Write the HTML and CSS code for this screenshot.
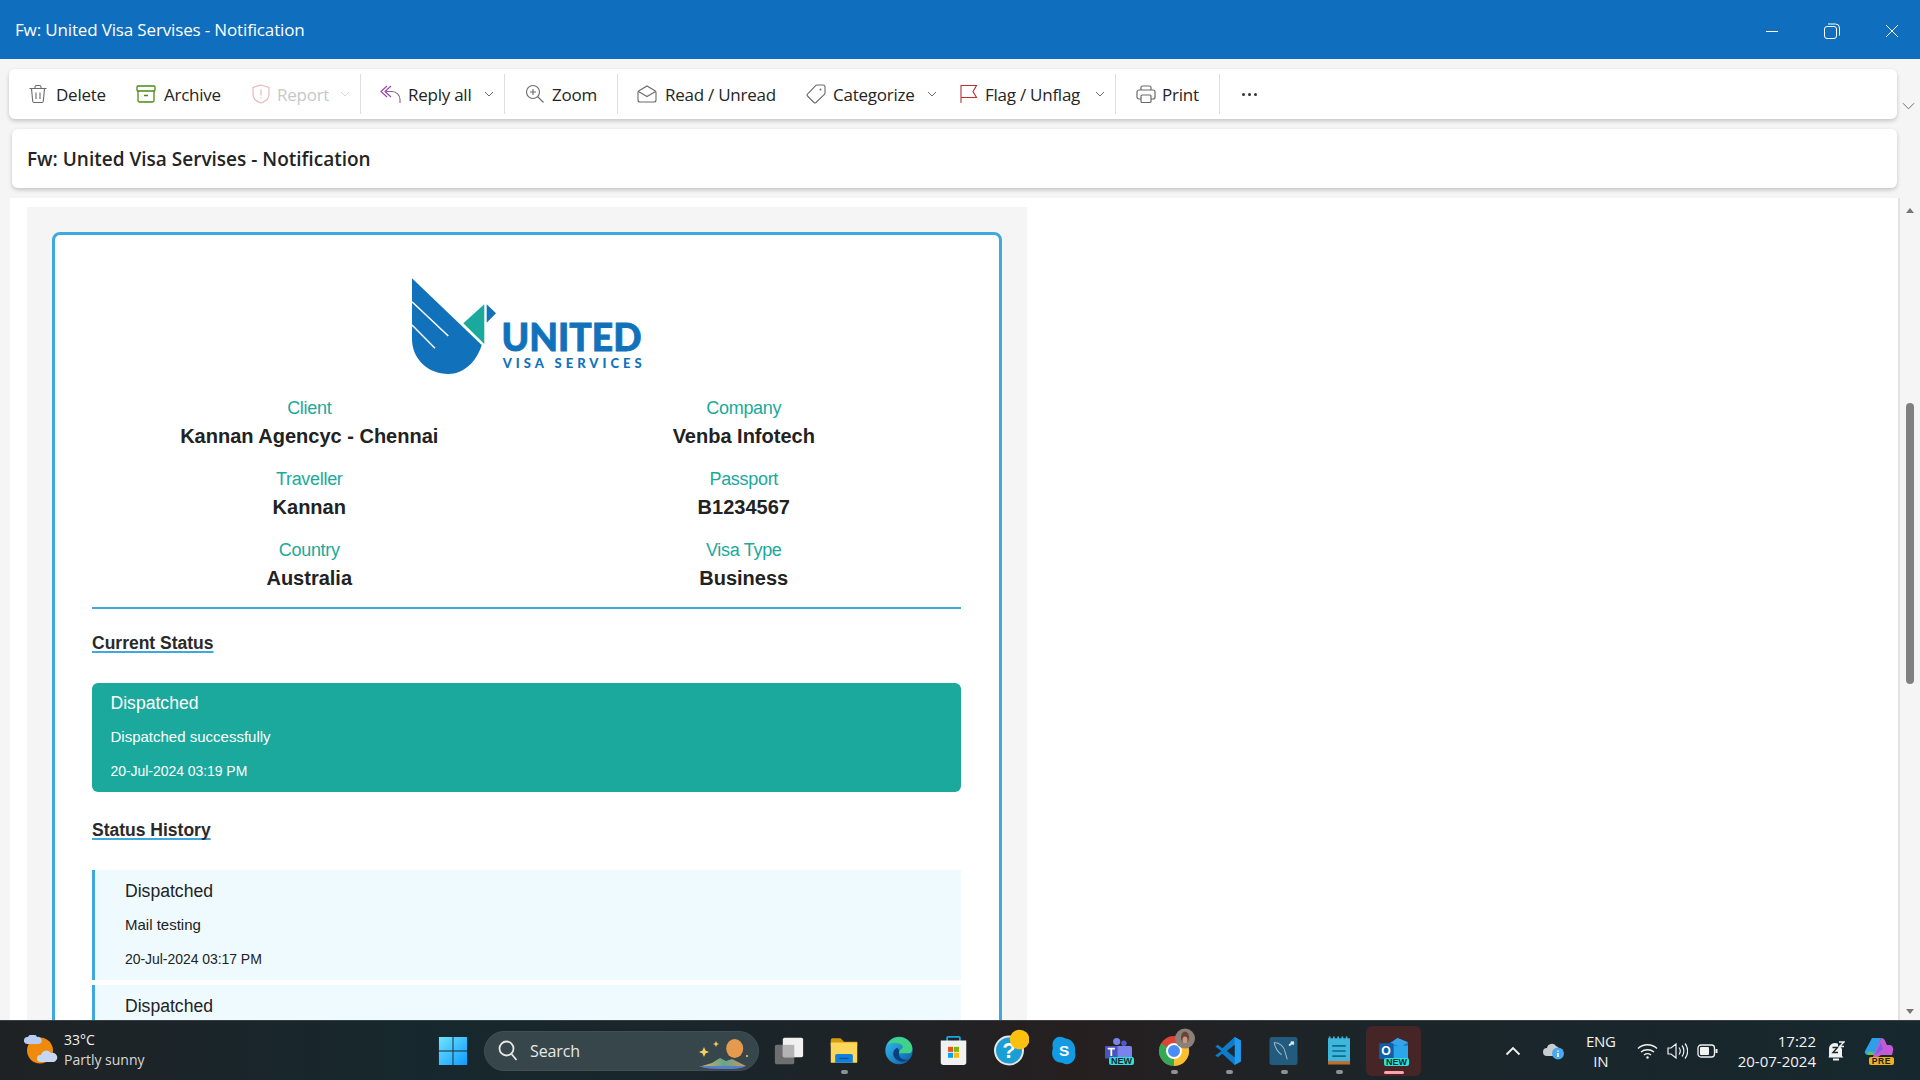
FILE: index.html
```html
<!DOCTYPE html>
<html lang="en">
<head>
<meta charset="utf-8">
<title>Fw: United Visa Servises - Notification</title>
<link rel="stylesheet" href="styles.css">
</head>
<body>
<div class="page">
  <header class="titlebar">
    <span class="title-text">Fw: United Visa Servises - Notification</span>
    <div class="win-controls">
      <svg width="14" height="14" viewBox="0 0 14 14"><path d="M1 7.500h12" stroke="#fff" fill="none"/></svg>
      <svg width="18" height="18" viewBox="0 0 18 18" fill="none" stroke="#fff"><rect x="1.500" y="4.500" width="12" height="12" rx="2.500"/><path d="M5 2h7.500a4 4 0 0 1 4 4v7.500"/></svg>
      <svg width="14" height="14" viewBox="0 0 14 14"><path d="M1 1l12 12M13 1L1 13" stroke="#fff" fill="none"/></svg>
    </div>
  </header>

  <div class="work">
    <div class="toolbar-row">
      <div class="card toolbar">
        <div class="tb-btn w-delete"><svg class="ic" viewBox="0 0 20 20" fill="none" stroke="#6b6b6b" stroke-width="1.100"><path d="M1.500 4.500h17M7 4.500V3a1.500 1.500 0 0 1 1.500-1.500h3A1.500 1.500 0 0 1 13 3v1.500M3.500 4.500l1.200 12.700a1.500 1.500 0 0 0 1.500 1.300h7.600a1.500 1.500 0 0 0 1.500-1.300l1.200-12.700M8 8.500v6.500M12 8.500v6.500"/></svg><span>Delete</span></div>
        <div class="tb-btn w-archive"><svg class="ic" viewBox="0 0 20 20" fill="none" stroke="#4a8a12" stroke-width="1.300"><rect x="1" y="2" width="18" height="5" rx="1"/><path d="M2 7v9.500A1.500 1.500 0 0 0 3.500 18h13a1.500 1.500 0 0 0 1.500-1.500V7M8 11.500h4"/></svg><span>Archive</span></div>
        <div class="tb-btn w-report muted"><svg class="ic" viewBox="0 0 20 20" fill="none" stroke="#e8b9bb" stroke-width="1.200"><path d="M10 1l8 2.500V10c0 4.500-3.500 7.500-8 9-4.500-1.500-8-4.500-8-9V3.500z"/><path d="M10 5.500v6M10 13.500v1.200"/></svg><span>Report</span><svg class="chev" viewBox="0 0 10 6" fill="none" stroke="#d8d8d8"><path d="M1 1l4 4 4-4"/></svg></div>
        <i class="sep"></i>
        <div class="tb-btn w-reply"><svg class="ic" viewBox="0 0 22 20" fill="none" stroke="#9b3fae" stroke-width="1.100"><path d="M7 2L1 7.500 7 13M11 2L5 7.500 11 13"/><path d="M5 7.500h7a8 8 0 0 1 8 8V19" stroke="#7d6a85"/></svg><span>Reply all</span><svg class="chev" viewBox="0 0 10 6" fill="none" stroke="#6b6b6b"><path d="M1 1l4 4 4-4"/></svg></div>
        <i class="sep"></i>
        <div class="tb-btn w-zoom"><svg class="ic" viewBox="0 0 20 20" fill="none" stroke="#6b6b6b" stroke-width="1.100"><circle cx="8" cy="8" r="6.500"/><path d="M12.500 12.500l6 6M8 5v6M5 8h6"/></svg><span>Zoom</span></div>
        <i class="sep"></i>
        <div class="tb-btn w-read"><svg class="ic" viewBox="0 0 20 20" fill="none" stroke="#6b6b6b" stroke-width="1.100"><path d="M1 8.500a2 2 0 0 1 1-1.700L10 2l8 4.800a2 2 0 0 1 1 1.700V16a2 2 0 0 1-2 2H3a2 2 0 0 1-2-2zM1.500 7.500l8.500 5 8.500-5"/></svg><span>Read / Unread</span></div>
        <div class="tb-btn w-cat"><svg class="ic" viewBox="0 0 20 20" fill="none" stroke="#6b6b6b" stroke-width="1.100"><path d="M11 1h6a2 2 0 0 1 2 2v6a2 2 0 0 1-.6 1.400L10 18.500a1.500 1.500 0 0 1-2 0L1.500 12a1.500 1.500 0 0 1 0-2L9.600 1.600A2 2 0 0 1 11 1z"/><circle cx="14.500" cy="5.500" r="1" fill="#6b6b6b" stroke="none"/></svg><span>Categorize</span><svg class="chev" viewBox="0 0 10 6" fill="none" stroke="#6b6b6b"><path d="M1 1l4 4 4-4"/></svg></div>
        <div class="tb-btn w-flag"><svg class="ic" viewBox="0 0 20 20" fill="none" stroke="#bc2f32" stroke-width="1.100"><path d="M2 19V1.500h15.500l-3.500 6 3.500 6H2"/></svg><span>Flag / Unflag</span><svg class="chev" viewBox="0 0 10 6" fill="none" stroke="#6b6b6b"><path d="M1 1l4 4 4-4"/></svg></div>
        <i class="sep"></i>
        <div class="tb-btn w-print"><svg class="ic" viewBox="0 0 20 20" fill="none" stroke="#6b6b6b" stroke-width="1.200"><path d="M5 6V3.500A1.500 1.500 0 0 1 6.500 2h7A1.500 1.500 0 0 1 15 3.500V6"/><path d="M5 15H3a2 2 0 0 1-2-2V8a2 2 0 0 1 2-2h14a2 2 0 0 1 2 2v5a2 2 0 0 1-2 2h-2"/><rect x="5" y="11" width="10" height="7.500" rx="1"/></svg><span>Print</span></div>
        <i class="sep"></i>
        <div class="tb-more"><b></b><b></b><b></b></div>
      </div>
      <svg class="tb-expand" viewBox="0 0 14 8" fill="none" stroke="#666"><path d="M1 1l6 6 6-6"/></svg>
    </div>

    <div class="subject-row"><div class="card subject">Fw: United Visa Servises - Notification</div></div>

    <div class="reading">
      <div class="message">
        <div class="mail-bg">
          <div class="mail-card">
            <div class="logo">
              <svg width="236" height="100" viewBox="0 0 236 100">
                <path d="M1 1.300L70.700 68C66 84 53 97 37.300 97 17 97 1 82 1 62z" fill="#1172bb"/>
                <path d="M1 24.700L37.300 59M1 48L24 71.300" stroke="#fff" stroke-width="1.500" fill="none"/>
                <path d="M52.300 46.300L73.300 27.300V67z" fill="#1aa99c"/>
                <path d="M75.700 27.300L85 36.300 75.700 45.700z" fill="#1172bb"/>
                <text x="90.500" y="74.300" class="logo-big" textLength="140" lengthAdjust="spacingAndGlyphs">UNITED</text>
                <text x="91.700" y="91.300" class="logo-small" textLength="139" lengthAdjust="spacing">VISA SERVICES</text>
              </svg>
            </div>
            <div class="info-grid">
              <div class="info"><div class="lbl">Client</div><div class="val">Kannan Agencyc - Chennai</div></div>
              <div class="info"><div class="lbl">Company</div><div class="val">Venba Infotech</div></div>
              <div class="info"><div class="lbl">Traveller</div><div class="val">Kannan</div></div>
              <div class="info"><div class="lbl">Passport</div><div class="val">B1234567</div></div>
              <div class="info"><div class="lbl">Country</div><div class="val">Australia</div></div>
              <div class="info"><div class="lbl">Visa Type</div><div class="val">Business</div></div>
            </div>
            <h3 class="sec-head first">Current Status</h3>
            <div class="current">
              <div class="st-name">Dispatched</div>
              <div class="st-line">Dispatched successfully</div>
              <div class="st-date">20-Jul-2024 03:19 PM</div>
            </div>
            <h3 class="sec-head">Status History</h3>
            <div class="hist">
              <div class="st-name">Dispatched</div>
              <div class="st-line">Mail testing</div>
              <div class="st-date">20-Jul-2024 03:17 PM</div>
            </div>
            <div class="hist">
              <div class="st-name">Dispatched</div>
            </div>
          </div>
        </div>
      </div>
      <div class="scroll">
        <svg class="sc-arrow" viewBox="0 0 8 5"><path d="M0 5L4 0l4 5z" fill="#777"/></svg>
        <div class="sc-track"><div class="sc-thumb"></div></div>
        <svg class="sc-arrow" viewBox="0 0 8 5"><path d="M0 0l4 5 4-5z" fill="#777"/></svg>
      </div>
    </div>
  </div>

  <footer class="taskbar">
    <div class="weather">
      <svg width="34" height="32" viewBox="0 0 34 32">
        <ellipse cx="16" cy="15.500" rx="13" ry="13" fill="#f08a0c"/>
        <path d="M3 9a3.500 3.500 0 0 1 1-7 5 5 0 0 1 9 0 3.500 3.500 0 0 1 2 7z" fill="#b9cdf0"/>
        <path d="M16 27a3.500 3.500 0 0 1 1-7 5.500 5.500 0 0 1 10-2 4.500 4.500 0 0 1 3 9z" fill="#c6d7f4"/>
      </svg>
      <div class="w-text"><div class="w-temp">33°C</div><div class="w-desc">Partly sunny</div></div>
    </div>
    <div class="tb-center">
      <div class="tk tk-start"><svg width="30" height="30" viewBox="0 0 32 32"><defs><linearGradient id="win" x1="0" y1="0" x2="1" y2="1"><stop offset="0" stop-color="#6fe3ff"/><stop offset="1" stop-color="#0f9bff"/></linearGradient></defs><path d="M1 1h14.500v14.500H1zM16.500 1H31v14.500H16.500zM1 16.500h14.500V31H1zM16.500 16.500H31V31H16.500z" fill="url(#win)"/></svg></div>
      <div class="search">
        <svg width="20" height="22" viewBox="0 0 20 22" fill="none" stroke="#e6e6e6" stroke-width="1.800"><circle cx="8.500" cy="8.500" r="7"/><path d="M13.500 14l5 6"/></svg>
        <span>Search</span>
        <svg class="search-art" width="52" height="30" viewBox="0 0 52 30"><defs><linearGradient id="mtn" x1="0" y1="0" x2="1" y2="0"><stop offset="0" stop-color="#d6b45c"/><stop offset=".5" stop-color="#63a58e"/><stop offset="1" stop-color="#c79a5c"/></linearGradient></defs><path d="M6 8l1.500 3.500L11 13l-3.500 1.500L6 18l-1.500-3.500L1 13l3.500-1.500zM18 2l1 2.200 2.200.8-2.200.8-1 2.200-1-2.200-2.200-.8 2.200-.8z" fill="#f6cf63"/><ellipse cx="36.700" cy="9.500" rx="8.500" ry="9.500" fill="#e69a4d"/><circle cx="49" cy="17" r="1" fill="#f6cf63"/><path d="M4 27l10-3 8-5 6 3 6-2 8 4 6 3z" fill="url(#mtn)"/><path d="M1 27h47c-4 2.500-10 3-20 3s-22 0-27-3z" fill="#5b7dc8"/></svg>
      </div>
      <div class="tk tk-task"><svg width="30" height="30" viewBox="0 0 34 34"><rect x="1" y="10" width="22" height="22" rx="2" fill="#6e6e6e"/><rect x="10" y="2" width="23" height="22" rx="2" fill="#f1f1f1"/><rect x="10" y="10" width="13" height="14" fill="#b4b4b4"/></svg></div>
      <div class="tk open"><svg width="30" height="27" viewBox="0 0 34 30"><path d="M2 3a2 2 0 0 1 2-2h9l4 4h15v5H2z" fill="#d79a0c"/><path d="M2 6h30v22a1 1 0 0 1-1 1H3a1 1 0 0 1-1-1z" fill="#fdd75b"/><path d="M7 29v-8a2 2 0 0 1 2-2h16a2 2 0 0 1 2 2v8z" fill="#0f7fdc"/><path d="M12 24h10" stroke="#0b4d9a" stroke-width="1.500"/></svg></div>
      <div class="tk"><svg width="30" height="31" viewBox="0 0 32 34"><defs><linearGradient id="edge" x1="0" y1="0" x2="1" y2="1"><stop offset="0" stop-color="#35c1f1"/><stop offset="1" stop-color="#0c59a4"/></linearGradient></defs><circle cx="16" cy="17" r="15" fill="url(#edge)"/><path d="M4 10C8 1 22 0 28 8c4 5 3 11 0 12H16c0-5 5-4 4-8-2-4-11-4-16-2z" fill="#3fd38a"/><path d="M14 14c-5 2-6 9-1 13 4 3 10 3 14 0-6 1-11-2-11-6 0-3 1-5-2-7z" fill="#0c3f82"/></svg></div>
      <div class="tk"><svg width="29" height="31" viewBox="0 0 30 34"><path d="M8 7V3a1 1 0 0 1 1-1h12a1 1 0 0 1 1 1v4" fill="none" stroke="#17a6e6" stroke-width="2"/><path d="M1 6h28v24a3 3 0 0 1-3 3H4a3 3 0 0 1-3-3z" fill="#f1f1f1"/><path d="M9 13h5.500v5.500H9z" fill="#f25022"/><path d="M15.500 13H21v5.500h-5.500z" fill="#7fba00"/><path d="M9 19.500h5.500V25H9z" fill="#00a4ef"/><path d="M15.500 19.500H21V25h-5.500z" fill="#ffb900"/></svg></div>
      <div class="tk"><svg width="40" height="44" viewBox="0 -2 40 44"><circle cx="20" cy="19.500" r="14" fill="#1a9ed4" stroke="#e6e6e6" stroke-width="2"/><text x="20" y="27" class="q-mark">?</text><circle cx="30.600" cy="8.500" r="9.800" fill="#fcc010"/></svg></div>
      <div class="tk"><svg width="28" height="29" viewBox="0 0 30 34"><path d="M10 1c3 0 4 1 7 2 8 1 12 8 11 16 2 7-3 14-10 14-3 0-5-2-8-2C3 30-1 23 2 14 0 8 4 1 10 1z" fill="#129ae2"/><text x="15" y="24" class="s-mark">S</text></svg></div>
      <div class="tk"><svg width="29" height="27" viewBox="0 0 32 30"><circle cx="14" cy="5" r="4" fill="#7b83eb"/><circle cx="22" cy="7" r="3" fill="#5059c9"/><rect x="11" y="10" width="20" height="19" rx="2" fill="#7b83eb"/><rect x="1" y="10" width="14" height="14" rx="1" fill="#4b53bc"/><path d="M4 13h8M8 13v8" stroke="#fff" stroke-width="2"/></svg><span class="new-badge">NEW</span></div>
      <div class="tk open"><svg width="44" height="48" viewBox="0 -4 44 48"><circle cx="22" cy="20" r="15" fill="#db4437"/><path d="M22 20L35 12.500A15 15 0 0 1 22 35z" fill="#fbc02d"/><path d="M22 20V35A15 15 0 0 1 9 12.500z" fill="#34a853"/><circle cx="22" cy="20" r="7" fill="#4a8cf5" stroke="#fff" stroke-width="2"/><circle cx="33" cy="7.500" r="10" fill="#8a8178"/><ellipse cx="33" cy="6.500" rx="4" ry="6" fill="#6b4234"/><ellipse cx="33" cy="9" rx="2.500" ry="3.500" fill="#c79a82"/></svg></div>
      <div class="tk open"><svg width="31" height="30" viewBox="0 0 30 34"><path d="M22 1l7 4v24l-7 4-14-13-5 4-3-2 7-5-7-5 3-2 5 4z" fill="#0f7cc9"/><path d="M22 1l7 4v24l-7 4V1z" fill="#1f9cf0"/><path d="M22 10l-9 7 9 7z" fill="#1a2b33"/></svg></div>
      <div class="tk open"><svg width="29" height="28" viewBox="0 0 30 30"><rect x="0" y="0" width="30" height="30" rx="3" fill="#235b7e"/><path d="M5 6c6 0 11 4 12 11l2 7M5 6c1 6 4 10 8 13" stroke="#9cb9c8" stroke-width="1.100" fill="none"/><path d="M21 9l5-4M23 5l3 3" stroke="#dfe8ee" stroke-width="2"/></svg></div>
      <div class="tk open"><svg width="22" height="30" viewBox="0 0 26 34"><rect x="0" y="2" width="26" height="30" fill="#3fb6dc"/><path d="M5 11h16M5 17h16M5 23h16" stroke="#0b6c8e" stroke-width="2"/><path d="M0 29h26v4H0z" fill="#c46a2c"/><path d="M2 0v3M7 0v3M12 0v3M17 0v3M22 0v3" stroke="#3fb6dc" stroke-width="2"/></svg></div>
      <div class="tk active"><svg width="30" height="28" viewBox="0 0 34 32"><path d="M10 8L21 1l12 5v20H10z" fill="#1579cd"/><path d="M21 1l12 5-8 5-12-4z" fill="#3aa3e8"/><path d="M17 10h16v16H17z" fill="#28a8ea"/><rect x="0" y="7" width="16" height="18" rx="1" fill="#0f5ea8"/><text x="8" y="21" class="o-mark">O</text></svg><span class="new-badge">NEW</span></div>
    </div>
    <div class="tray">
      <svg width="16" height="10" viewBox="0 0 16 10" fill="none" stroke="#f2f2f2" stroke-width="1.800"><path d="M1.500 8.500L8 2l6.500 6.500"/></svg>
      <svg class="tray-cloud" width="22" height="18" viewBox="0 0 22 18"><path d="M4 14a4 4 0 0 1 0-8 5 5 0 0 1 9-2 4 4 0 0 1 3 3v7z" fill="#c8cdd0"/><circle cx="15" cy="11.500" r="6" fill="#4aa8ee"/><path d="M15 8.500v1.200M15 11v4" stroke="#fff" stroke-width="1.500"/></svg>
      <div class="lang"><div>ENG</div><div>IN</div></div>
      <div class="tray-icons">
        <svg width="21" height="16" viewBox="0 0 21 16" fill="none" stroke="#f2f2f2" stroke-width="1.300"><path d="M1 5.500c5-5 14-5 19 0M4 9c3.500-3 9.500-3 13 0M7 12c2-1.500 5-1.500 7 0"/><circle cx="10.500" cy="14.500" r="1.200" fill="#f2f2f2" stroke="none"/></svg>
        <svg width="21" height="18" viewBox="0 0 21 18" fill="none" stroke="#f2f2f2" stroke-width="1.200"><path d="M1 6h3l5-4v14l-5-4H1zM12 5.500c1.500 2 1.500 5 0 7M15 3.500c2.500 3 2.500 8 0 11M18 1.500c3.500 4 3.500 11 0 15"/></svg>
        <svg width="21" height="14" viewBox="0 0 21 14"><rect x="1" y="1" width="16.500" height="12" rx="3" fill="none" stroke="#f2f2f2" stroke-width="1.300"/><rect x="3" y="3" width="9" height="8" rx="1" fill="#f2f2f2"/><rect x="18.500" y="5" width="2" height="4" fill="#f2f2f2"/></svg>
      </div>
      <div class="clock"><div>17:22</div><div>20-07-2024</div></div>
      <svg class="bell" width="18" height="20" viewBox="0 0 18 20"><path d="M2 15V8a6 6 0 0 1 9-5.200V6h2.500L15 8v7l1.500 1.500h-15z" fill="#f2f2f2"/><path d="M6 18.500h6" stroke="#f2f2f2" stroke-width="2"/><path d="M5.500 6.500h5l-4.500 5h5" stroke="#1a2528" stroke-width="1.400" fill="none"/><path d="M12 1h5l-4.500 4.500H17" stroke="#f2f2f2" stroke-width="1.400" fill="none"/></svg>
      <div class="copilot"><svg width="30" height="24" viewBox="0 0 30 24"><path d="M8 1h9l-6 17H4a3 3 0 0 1-3-4z" fill="#2f9fe8"/><path d="M3 15c4-1 8 0 8 3H4z" fill="#63c54b"/><path d="M17 1c3 0 4 2 5 5l1 2h3c2 0 4 3 3 6l-1 4H17l-6 4H8z" fill="#c25bd6"/><path d="M11 18l6-12 2 6z" fill="#7d5ce6"/></svg><span class="pre-badge">PRE</span></div>
    </div>
  </footer>
</div>
</body>
</html>
```

FILE: styles.css
```css
* { box-sizing: border-box; }
html, body { margin: 0; height: 100%; overflow: hidden; }
body { font-family: "Open Sans", "Noto Sans", sans-serif; background: #f5f5f5; color: #242424; }
.page { display: flex; flex-direction: column; height: 1080px; }

.titlebar { height: 59px; flex: none; background: #106ebe; color: #fff; display: flex; align-items: center; justify-content: space-between; padding: 0 0 0 15px; }
.title-text { font-size: 17px; letter-spacing: -0.15px; }
.win-controls { display: flex; align-items: center; gap: 44px; padding-right: 21px; margin-top: 3px; }

.work { flex: 1; min-height: 0; display: flex; flex-direction: column; }
.card { background: #fff; border-radius: 6px; box-shadow: 0 2px 4px rgba(0,0,0,.2); }
.toolbar-row { display: flex; align-items: flex-start; padding: 10px 0 0 9px; height: 60px; flex: none; }
.toolbar { width: 1888px; height: 50px; display: flex; align-items: center; padding: 0 0 0 19px; flex: none; }
.tb-expand { width: 13px; height: 8px; margin: 33px 0 0 5px; flex: none; }
.tb-btn { display: flex; align-items: center; height: 100%; font-size: 17px; letter-spacing: -0.25px; color: #242424; flex: none; }
.tb-btn span { margin-left: 8px; }
.ic { width: 20px; height: 20px; flex: none; }
.chev { width: 10px; height: 6px; margin-left: 11px; flex: none; }
.tb-btn.muted { color: #c8c8c8; }
.sep { width: 1px; height: 40px; background: #dedede; flex: none; }
.w-delete { width: 108px; }
.w-archive { width: 115px; }
.w-report { width: 109px; }
.w-report span { margin-left: 6px; }
.w-reply { width: 143px; padding-left: 19px; }
.w-reply .ic { width: 22px; }
.w-reply span { margin-left: 6px; }
.w-reply .chev { margin-left: 13px; }
.w-zoom { width: 112px; padding-left: 20px; }
.w-zoom span { margin-left: 7px; }
.w-read { width: 188px; padding-left: 19px; }
.w-cat { width: 153px; }
.w-cat span { margin-left: 7px; }
.w-cat .chev { margin-left: 13px; }
.w-flag { width: 156px; }
.w-flag span { margin-left: 6px; }
.w-flag .chev { margin-left: 15px; }
.w-print { width: 103px; padding-left: 20px; }
.w-print span { margin-left: 6px; }
.tb-more { display: flex; gap: 3px; padding-left: 22px; }
.tb-more b { width: 3px; height: 3px; border-radius: 50%; background: #333; }

.subject-row { padding: 10px 23px 0 12px; height: 69px; flex: none; }
.subject { height: 59px; display: flex; align-items: center; padding: 0 15px; font-size: 19px; font-weight: 600; }

.reading { flex: 1; min-height: 0; display: flex; margin-top: 10px; }
.message { width: 1888px; margin-left: 10px; background: #fff; padding: 9px 0 0 17px; overflow: hidden; flex: none; }
.mail-bg { width: 1000px; background: #f5f5f5; padding: 25px 25px 0 25px; height: 900px; }
.mail-card { background: #fff; border: 3px solid #3ea9dc; border-radius: 8px; padding: 42px 38px 0 37px; height: 1000px; font-family: "Liberation Sans", Arial, sans-serif; }

.logo { display: flex; justify-content: center; height: 100px; padding-left: 4px; }
.logo-big { font-family: Lato, sans-serif; font-weight: 900; font-size: 37px; fill: #1172bb; stroke: #1172bb; stroke-width: .8px; }
.logo-small { font-family: Lato, sans-serif; font-weight: 900; font-size: 13px; fill: #1172bb; }

.info-grid { display: grid; grid-template-columns: 1fr 1fr; row-gap: 15px; padding-bottom: 13px; border-bottom: 2px solid #3ea9dc; margin-top: 19px; }
.info { text-align: center; height: 56px; }
.lbl { font-size: 18px; line-height: 24px; color: #1aa99c; letter-spacing: -0.3px; }
.val { font-size: 20px; line-height: 32px; font-weight: 700; color: #222; }

.sec-head { font-size: 17.5px; line-height: 24px; margin: 26px 0 0; color: #2a2a2a; font-weight: 700; text-decoration: underline #3ea9dc 1.5px; text-underline-offset: 2px; text-decoration-skip-ink: none; }
.sec-head.first { margin-top: 22px; }

.current { margin-top: 28px; height: 109px; background: #1aa99c; color: #fff; border-radius: 6px; padding: 8px 18.5px; }
.hist { margin-top: 5px; height: 110px; background: #effaff; border-left: 3px solid #3ea9dc; padding: 9px 30px; color: #222; }
.sec-head + .hist { margin-top: 28px; }
.st-name { font-size: 17.6px; line-height: 24px; }
.st-line { font-size: 15px; line-height: 20px; margin-top: 12px; }
.st-date { font-size: 14px; line-height: 20px; margin-top: 14px; letter-spacing: -0.05px; }

.scroll { width: 22px; flex: none; display: flex; flex-direction: column; align-items: center; padding: 10px 0 6px; border-left: 2px solid #e2e2e2; }
.sc-arrow { width: 8px; height: 5px; flex: none; }
.sc-track { flex: 1; width: 100%; display: flex; justify-content: center; padding-top: 190px; }
.sc-thumb { width: 8px; height: 281px; border-radius: 4px; background: #808080; }

.taskbar { height: 60px; flex: none; display: flex; align-items: center; color: #f2f2f2; border-top: 1px solid #3a3f41; background: linear-gradient(90deg, #1f2224 0, #16282e 22%, #1b2529 40%, #261f20 56%, #1b2529 72%, #16282e 100%); }
.weather { display: flex; align-items: center; width: 438px; padding-left: 24px; gap: 6px; flex: none; }
.w-text { font-size: 14px; line-height: 20px; margin-top: -1px; }
.w-desc { color: #d8d8d8; }
.tb-center { display: flex; align-items: center; flex: none; }
.tk { width: 55px; height: 59px; display: flex; align-items: center; justify-content: center; position: relative; flex: none; }
.tk-start { width: 46px; justify-content: flex-start; }
.search { width: 275px; height: 40px; border-radius: 20px; background: #36464b; border: 1px solid #3f5056; display: flex; align-items: center; padding-left: 13px; font-size: 16px; color: #e8e8e8; letter-spacing: -0.1px; position: relative; flex: none; }
.search span { margin-left: 12px; }
.search-art { position: absolute; right: 8px; top: 7px; }
.tk-task { margin-left: 2px; }
.open::after { content: ""; position: absolute; left: 50%; bottom: 6px; width: 7px; height: 4px; margin-left: -3px; border-radius: 2px; background: #8e9293; }
.tk.active { background: #452526; border-radius: 6px; height: 50px; }
.active::after { content: ""; position: absolute; left: 50%; bottom: 2px; width: 20px; height: 3px; margin-left: -10px; border-radius: 2px; background: #ffa2ae; }
.new-badge { position: absolute; right: 12px; bottom: 15px; background: #2fe0d8; color: #12282c; font: 700 9px/8px "Liberation Sans", sans-serif; padding: 0 2px; border-radius: 2px; }
.active .new-badge { right: 12px; bottom: 10px; }
.q-mark { font: 700 22px "Liberation Sans", sans-serif; fill: #fff; text-anchor: middle; }
.s-mark { font: 700 18px "Liberation Sans", sans-serif; fill: #fff; text-anchor: middle; }
.o-mark { font: 700 14px "Liberation Sans", sans-serif; fill: #fff; text-anchor: middle; }

.tray { margin-left: auto; display: flex; align-items: center; flex: none; padding-right: 26px; }
.tray-cloud { margin-left: 22px; }
.lang { font-size: 15px; line-height: 20px; text-align: center; margin-left: 21px; width: 30px; letter-spacing: -0.3px; }
.tray-icons { display: flex; align-items: center; gap: 9px; margin-left: 21px; }
.clock { text-align: right; font-size: 15px; line-height: 20px; margin-left: 20px; }
.bell { margin-left: 11px; }
.copilot { position: relative; margin-left: 19px; width: 30px; height: 27px; }
.pre-badge { position: absolute; right: 0; bottom: -1px; background: #f0b21a; color: #1d1d1d; font: 700 8.5px/8px "Liberation Sans", sans-serif; padding: 0 3px; border-radius: 2px; letter-spacing: .6px; }
```
